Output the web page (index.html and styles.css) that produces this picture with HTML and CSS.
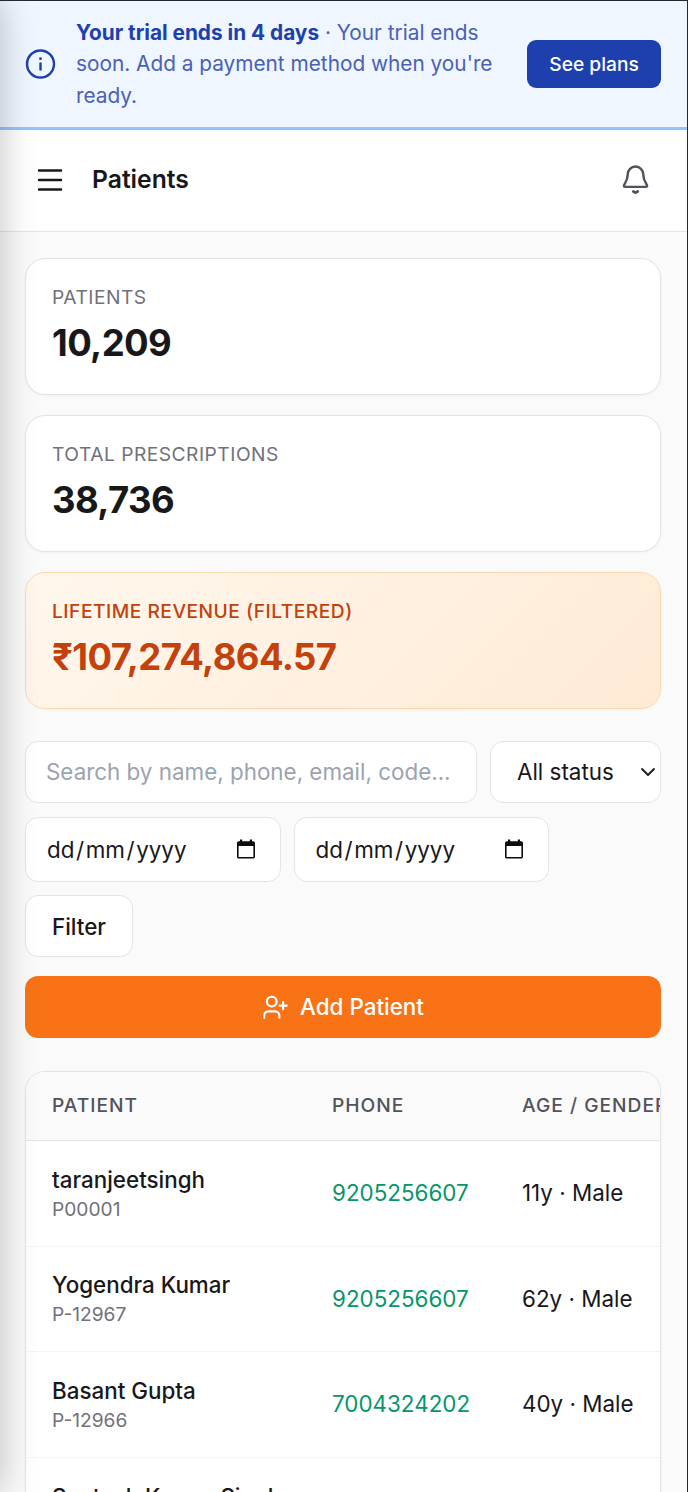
FILE: index.html
```html
<!DOCTYPE html>
<html lang="en">
<head>
<meta charset="utf-8">
<meta name="viewport" content="width=device-width, initial-scale=1">
<title>Patients</title>
<link rel="stylesheet" href="styles.css">
</head>
<body>
<div class="app">
  <div class="trial">
    <svg class="trial-icon" viewBox="0 0 32 32" fill="none" stroke="currentColor" stroke-width="2.4" stroke-linecap="round"><circle cx="15.500" cy="16" r="13.5"/><path d="M15.500 15.5v6"/><path d="M15.500 10.6v.1" stroke-width="2.8"/></svg>
    <p class="trial-text"><span class="line"><strong>Your trial ends in 4 days</strong> · Your trial ends</span> <span class="line">soon. Add a payment method when you're</span> <span class="line">ready.</span></p>
    <button class="plans" type="button">See plans</button>
  </div>
  <header class="topbar">
    <svg class="menu" viewBox="0 0 26 26" fill="none" stroke="currentColor" stroke-width="2.5" stroke-linecap="round"><path d="M2 3.6h22M2 13h22M2 22.4h22"/></svg>
    <h1 class="title">Patients</h1>
    <svg class="bell" viewBox="0 0 24 24" fill="none" stroke="currentColor" stroke-width="1.9" stroke-linecap="round" stroke-linejoin="round"><path d="M6 8a6 6 0 0 1 12 0c0 5.500 3 7.600 3 9 0 .4-.4.7-.9.7H3.900c-.5 0-.9-.3-.9-.7C3 15.600 6 13.500 6 8"/><path d="M10.400 21.300c.9.800 2.300.800 3.200 0" stroke-width="2.200"/></svg>
  </header>
  <main class="content">
    <section class="stats">
      <div class="card"><div class="label">Patients</div><div class="value">10,209</div></div>
      <div class="card"><div class="label">Total prescriptions</div><div class="value">38,736</div></div>
      <div class="card revenue"><div class="label">Lifetime revenue (filtered)</div><div class="value">₹107,274,864.57</div></div>
    </section>
    <form class="filters">
      <input class="field search" type="text" placeholder="Search by name, phone, email, code...">
      <div class="field status"><span>All status</span><svg class="chevron" viewBox="0 0 16 10" fill="none" stroke="currentColor" stroke-width="1.800" stroke-linecap="round" stroke-linejoin="round"><path d="M2 2l6 6 6-6"/></svg></div>
      <div class="field date"><span>dd<i>/</i>mm<i>/</i>yyyy</span><svg class="calendar" viewBox="0 0 18 20"><path fill="currentColor" fill-rule="evenodd" d="M3 .5h2.200v1.700h7.600V.5H15v1.700h1.200c1 0 1.800.8 1.800 1.800v13.700c0 1-.8 1.800-1.800 1.800H1.800c-1 0-1.800-.8-1.800-1.800V4c0-1 .8-1.800 1.800-1.800H3zM1.600 7v11h14.800V7z"/></svg></div>
      <div class="field date"><span>dd<i>/</i>mm<i>/</i>yyyy</span><svg class="calendar" viewBox="0 0 18 20"><path fill="currentColor" fill-rule="evenodd" d="M3 .5h2.200v1.700h7.600V.5H15v1.700h1.200c1 0 1.800.8 1.800 1.800v13.700c0 1-.8 1.800-1.800 1.800H1.800c-1 0-1.800-.8-1.800-1.800V4c0-1 .8-1.800 1.800-1.800H3zM1.600 7v11h14.800V7z"/></svg></div>
      <button class="field filter" type="button">Filter</button>
    </form>
    <button class="add" type="button"><svg class="add-icon" viewBox="0 0 24 24" fill="none" stroke="currentColor" stroke-width="2" stroke-linecap="round" stroke-linejoin="round"><path d="M16 22v-2a4 4 0 0 0-4-4H6a4 4 0 0 0-4 4v2"/><circle cx="9" cy="7" r="4.500"/><path d="M19.500 7.500v6.500M16.300 10.800h6.500"/></svg><span>Add Patient</span></button>
    <div class="table-wrap">
      <table class="table">
        <thead><tr><th class="c1">Patient</th><th class="c2">Phone</th><th class="c3">Age / Gender</th></tr></thead>
        <tbody>
          <tr><td><div class="name">taranjeetsingh</div><div class="code">P00001</div></td><td class="phone">9205256607</td><td>11y · Male</td></tr>
          <tr><td><div class="name">Yogendra Kumar</div><div class="code">P-12967</div></td><td class="phone">9205256607</td><td>62y · Male</td></tr>
          <tr><td><div class="name">Basant Gupta</div><div class="code">P-12966</div></td><td class="phone">7004324202</td><td>40y · Male</td></tr>
          <tr><td><div class="name">Santosh Kumar Singh</div></td><td></td><td></td></tr>
        </tbody>
      </table>
    </div>
  </main>
  <div class="drawer-shadow"></div>
</div>
</body>
</html>
```
FILE: styles.css
```css
* { box-sizing: border-box; }
body { margin: 0; background: #fafafa; color: #18181b; font-family: Inter, "Liberation Sans", sans-serif; }
.app { position: relative; width: 688px; height: 1492px; overflow: hidden; border-top: 1px solid #27272f; border-right: 1px solid #27272f; }
button, input { font-family: inherit; }

.trial { display: flex; align-items: center; height: 129px; padding: 0 26px 0 25px; background: #eff6ff; border-bottom: 3px solid #93c5fd; color: #1e40af; }
.trial-icon { width: 32px; height: 32px; flex: none; }
.trial-text { flex: 1; margin: 0 0 0 19px; font-size: 20.8px; line-height: 31.4px; color: #4a60b8; white-space: nowrap; }
.trial-text strong { font-weight: 700; color: #1e40af; }
.line { display: block; }
.plans { width: 134px; height: 48px; padding: 0; border: 0; border-radius: 9px; background: #1e40af; color: #fff; font-size: 19.2px; font-weight: 500; }

.topbar { display: flex; align-items: center; height: 102px; padding: 0 36px 2px 37px; background: #fff; border-bottom: 1.500px solid #e4e4e7; }
.menu { width: 26px; height: 26px; }
.title { margin: 0 auto 0 29px; padding-bottom: 2px; font-size: 24.700px; line-height: 32px; font-weight: 600; }
.bell { width: 31px; height: 31px; color: #52525b; }

.content { padding: 26px 26px 0 25px; }
.stats { display: flex; flex-direction: column; gap: 20px; }
.card { height: 137px; padding: 25px 26px; border: 1.600px solid #e4e4e7; border-radius: 20px; background: #fff; box-shadow: 0 1px 3px rgba(0,0,0,.04); }
.label { font-size: 19.2px; line-height: 26px; letter-spacing: .5px; text-transform: uppercase; color: #71717a; }
.value { margin-top: 5px; font-size: 36.500px; line-height: 56px; font-weight: 750; letter-spacing: -.6px; }
.revenue { background: linear-gradient(135deg, #fff7ed, #ffead5); border-color: #fcd9ae; color: #c2410c; }
.revenue .label { color: #c2410c; font-weight: 500; }

.filters { display: flex; flex-wrap: wrap; gap: 14px 13px; margin-top: 32px; }
.field { display: flex; align-items: center; height: 62px; border: 1.600px solid #e4e4e7; border-radius: 13px; background: #fff; color: #18181b; font-size: 22.400px; }
.search { width: 452px; padding: 0 20px 2px; outline: 0; }
.search::placeholder { color: #9ca3af; opacity: 1; }
.status { justify-content: space-between; width: 171px; padding: 0 4px 1px 26px; }
.chevron { width: 16px; height: 10px; }
.date { justify-content: space-between; width: 255.500px; height: 65px; padding: 0 25px 1px 21px; }
.date i { margin: 0 1.600px; font-style: normal; }
.calendar { width: 18px; height: 20px; color: #0c0c0e; }
.filter { justify-content: center; width: 108px; height: 62px; margin-top: -1px; padding: 0; font-weight: 500; }
.add { display: flex; align-items: center; justify-content: center; gap: 12px; width: 100%; height: 62px; margin-top: 19px; padding: 0 0 1px; border: 0; border-radius: 13px; background: #f97316; color: #fff; font-size: 22.400px; font-weight: 500; }
.add-icon { width: 26px; height: 26px; }

.table-wrap { height: 500px; margin-top: 33px; overflow: hidden; border: 1.600px solid #e4e4e7; border-radius: 20px; background: #fff; box-shadow: 0 1px 3px rgba(0,0,0,.05); }
.table { width: 760px; table-layout: fixed; border-collapse: separate; border-spacing: 0; }
.table th { height: 69px; padding: 0 0 2px 26px; border-bottom: 1.600px solid #e4e4e7; background: #fafafa; color: #52525b; font-size: 19.200px; font-weight: 500; letter-spacing: 1px; text-align: left; text-transform: uppercase; white-space: nowrap; }
.c1 { width: 280px; }
.c2 { width: 190px; }
.table td { height: 105.500px; padding: 0 0 1px 26px; border-bottom: 1.600px solid #f4f4f5; font-size: 22.400px; white-space: nowrap; }
.name { font-weight: 500; line-height: 32px; }
.code { color: #71717a; font-size: 19.200px; line-height: 26px; }
.table tbody tr:last-child td { padding-top: 10px; padding-bottom: 36px; }
.table .phone { color: #059669; }

/* edge shadow cast by the closed navigation drawer */
.drawer-shadow { position: absolute; top: -1px; left: -40px; width: 40px; height: 1492px; box-shadow: 0 0 36px 0 rgba(0,0,0,.25); pointer-events: none; }
```
